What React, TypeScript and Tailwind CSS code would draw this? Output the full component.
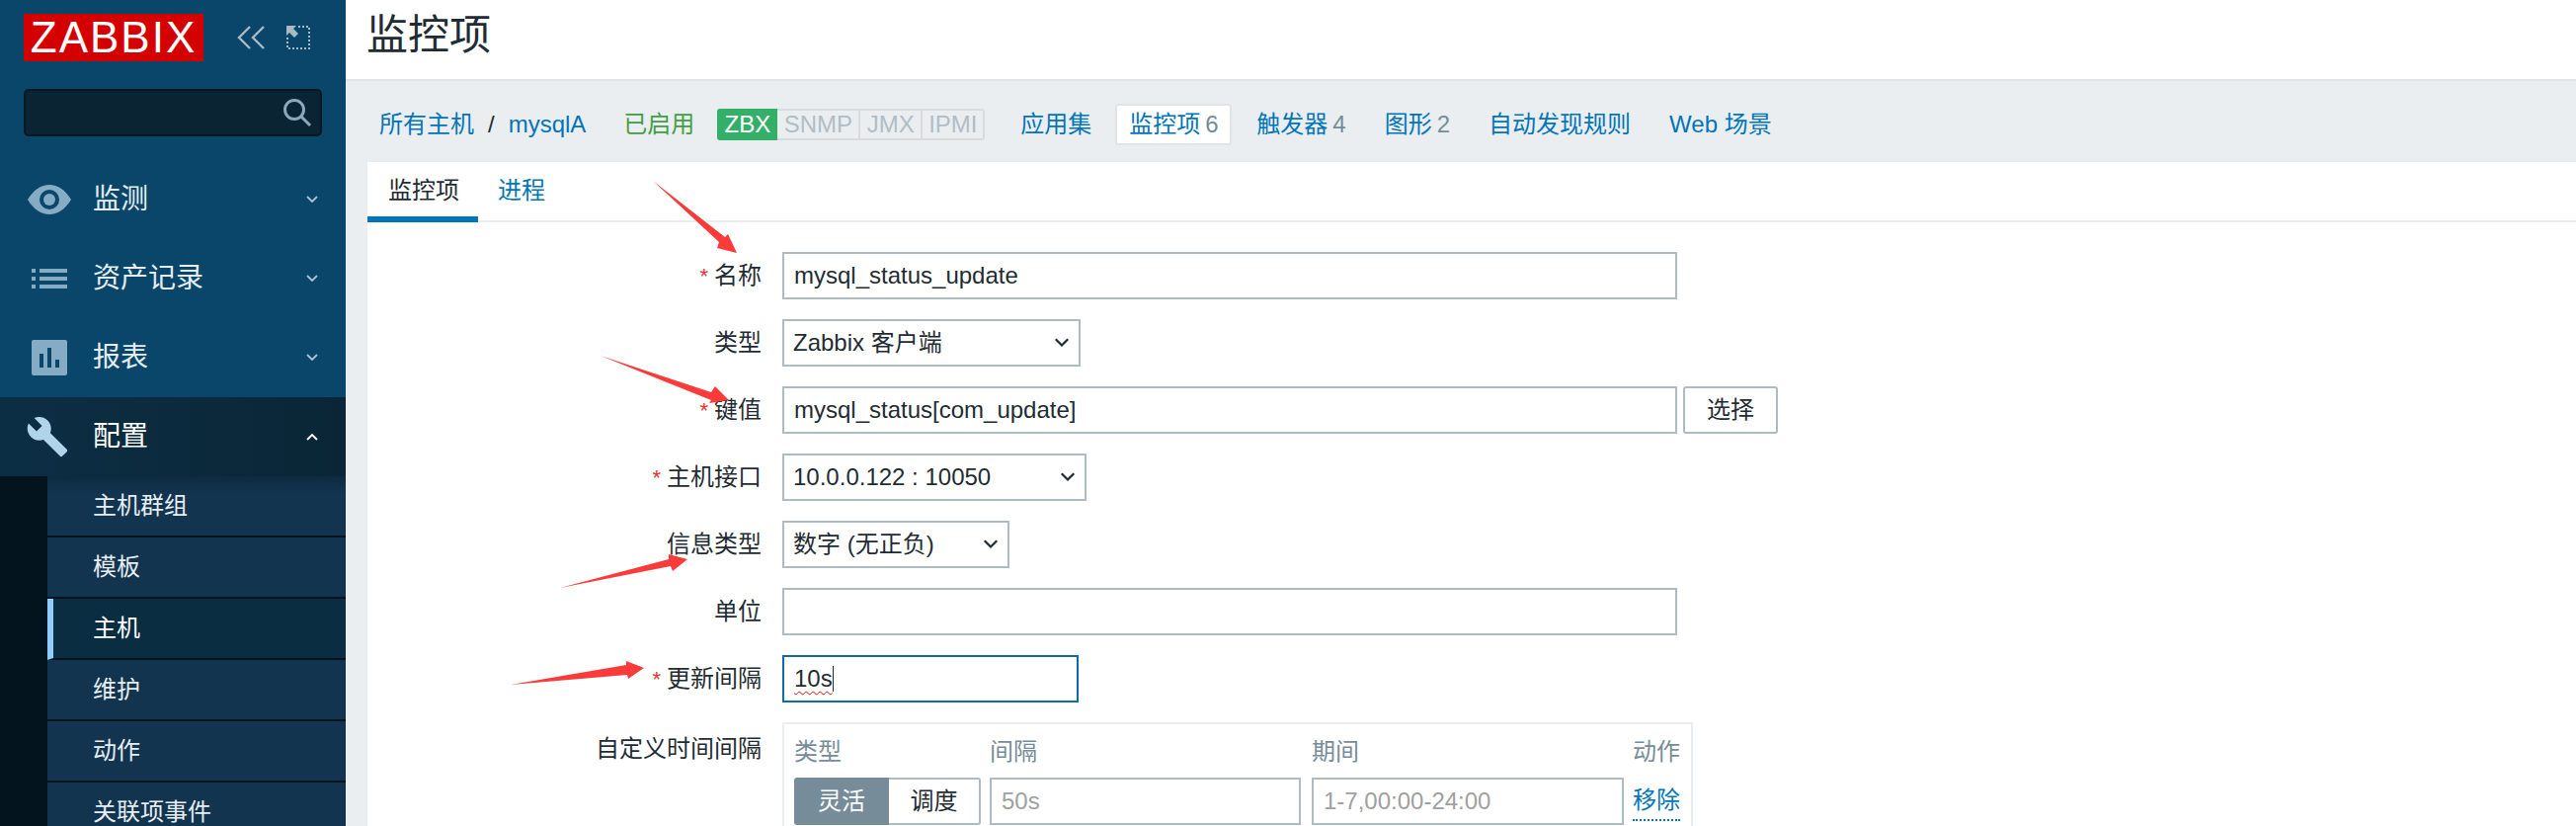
import type { ReactNode } from "react"
import { MdBuild } from "react-icons/md"

const font = { fontFamily: '"Liberation Sans", "Noto Sans CJK SC", sans-serif' }

function Chevron({ up, className }: { up?: boolean; className?: string }) {
  return (
    <svg viewBox="0 0 12 8" className={className} fill="none" stroke="currentColor" strokeWidth="1.8">
      <polyline points={up ? "1,7 6,2 11,7" : "1,1 6,6 11,1"} />
    </svg>
  )
}

function EyeIcon() {
  return (
    <svg viewBox="0 0 44 30" className="w-[44px] h-[30px]">
      <path d="M0 15C6 5 14 0 22 0s16 5 22 15c-6 10-14 15-22 15S6 25 0 15z" fill="#86acc5" />
      <circle cx="22" cy="15" r="10" fill="#0a466a" />
      <circle cx="22" cy="15" r="6" fill="#86acc5" />
    </svg>
  )
}

function ListIcon() {
  return (
    <svg viewBox="0 0 36 20" className="w-[36px] h-[20px]" fill="#86acc5">
      <rect x="0" y="0" width="4" height="4" />
      <rect x="0" y="8" width="4" height="4" />
      <rect x="0" y="16" width="4" height="4" />
      <rect x="8" y="0" width="28" height="4" />
      <rect x="8" y="8" width="28" height="4" />
      <rect x="8" y="16" width="28" height="4" />
    </svg>
  )
}

function ChartIcon() {
  return (
    <svg viewBox="0 0 36 36" className="w-[36px] h-[36px]">
      <rect width="36" height="36" rx="2" fill="#86acc5" />
      <rect x="8" y="14" width="4" height="14" fill="#0a466a" />
      <rect x="16" y="8" width="4" height="20" fill="#0a466a" />
      <rect x="24" y="20" width="4" height="8" fill="#0a466a" />
    </svg>
  )
}

const mainNav = [
  { label: "监测", icon: <EyeIcon /> },
  { label: "资产记录", icon: <ListIcon /> },
  { label: "报表", icon: <ChartIcon /> },
]

const subNav = ["主机群组", "模板", "主机", "维护", "动作", "关联项事件"]

function subNavClass(item: string) {
  const base = "h-[62px] border-b-2 border-[#04141e] flex items-center text-[24px] "
  if (item === "主机") return base + "bg-[#0a2d42] border-l-[6px] border-l-[#8fcdff] pl-[40px] text-white"
  if (item === "主机群组") return base + "bg-gradient-to-b from-[#0c2b40] to-[#12344f] to-30% pl-[46px] text-[#e6eef3]"
  return base + "bg-[#12344f] pl-[46px] text-[#e6eef3]"
}

function Sidebar() {
  return (
    <aside className="w-[350px] shrink-0 bg-[#0a466a] flex flex-col">
      <div className="flex items-start pl-6 pt-[14px] h-[90px] shrink-0">
        <div className="w-[182px] h-[48px] bg-[#d40000] text-white text-[44px] leading-[48px] tracking-[2px] text-center">
          ZABBIX
        </div>
        <svg viewBox="0 0 28 24" className="w-[28px] h-[24px] ml-[34px] mt-[12px] text-[#a8bac6]" fill="none" stroke="currentColor" strokeWidth="2.4">
          <polyline points="13,1 2,12 13,23" />
          <polyline points="27,1 16,12 27,23" />
        </svg>
        <svg viewBox="0 0 24 24" className="w-[24px] h-[24px] ml-[22px] mt-[12px] text-[#a8bac6]" fill="none">
          <path d="M12 1H23V23H1V12" stroke="currentColor" strokeWidth="2" strokeDasharray="2 2" />
          <path d="M0 0H10L7 3L12 8L8 12L3 7L0 10Z" fill="currentColor" />
        </svg>
      </div>
      <div className="mx-6 w-[302px] h-[48px] shrink-0 rounded-[5px] border-2 border-[#041820] bg-[#0a2433] flex items-center justify-end pr-2">
        <svg viewBox="0 0 30 30" className="w-[30px] h-[30px] text-[#8aa9bc]" fill="none" stroke="currentColor" strokeWidth="3">
          <circle cx="12" cy="12" r="9.5" />
          <line x1="19" y1="19" x2="28" y2="28" />
        </svg>
      </div>
      <nav className="mt-6 shrink-0">
        {mainNav.map((item) => (
          <div key={item.label} className="h-[80px] flex items-center text-[28px] text-[#e6eef3]">
            <span className="w-[94px] pl-[26px] flex justify-center pr-[20px]">{item.icon}</span>
            <span>{item.label}</span>
            <Chevron className="w-[12px] h-[8px] ml-auto mr-[28px] text-[#a9c4d3]" />
          </div>
        ))}
        <div className="h-[80px] flex items-center text-[28px] text-white bg-gradient-to-r from-[#0c2e44] to-[#0a2636]">
          <span className="w-[94px] flex pl-[26px]">
            <MdBuild className="w-[44px] h-[44px] text-[#b0d4ea]" />
          </span>
          <span>配置</span>
          <Chevron up className="w-[12px] h-[8px] ml-auto mr-[28px] text-white" />
        </div>
        <div className="bg-[#04141e] pl-12">
          {subNav.map((item) => (
            <div key={item} className={subNavClass(item)}>
              {item}
            </div>
          ))}
        </div>
      </nav>
    </aside>
  )
}

function HostNav() {
  const proto = [
    { t: "SNMP", w: "w-[84px]" },
    { t: "JMX", w: "w-[63px]" },
    { t: "IPMI", w: "w-[63px]" },
  ]
  return (
    <div className="h-[80px] pt-2 bg-[#ebeef0] flex items-center pl-[34px] text-[24px] text-[#0275b8] whitespace-nowrap">
      <span>所有主机</span>
      <span className="mx-[14px] text-[#1f2c33]">/</span>
      <span>mysqlA</span>
      <span className="ml-[38px] text-[#429e47]">已启用</span>
      <div className="ml-[23px] h-[32px] flex text-[#b1bdc6] leading-[28px]">
        <span className="w-[61px] rounded-l-[3px] bg-[#34af67] text-white text-center leading-[32px]">ZBX</span>
        {proto.map((p, i) => (
          <span key={p.t} className={`${p.w} border-y-2 border-r-2 border-[#d5dbdf] text-center ${i === 2 ? "rounded-r-[3px]" : ""}`}>
            {p.t}
          </span>
        ))}
      </div>
      <span className="ml-[36px]">应用集</span>
      <span className="ml-[24px] h-[42px] w-[118px] rounded-[3px] border-2 border-[#dfe4e7] bg-white flex items-center justify-center">
        监控项<span className="ml-[5px] text-[#768d99]">6</span>
      </span>
      <span className="ml-[25px]">触发器<span className="ml-[5px] text-[#768d99]">4</span></span>
      <span className="ml-[39px]">图形<span className="ml-[5px] text-[#768d99]">2</span></span>
      <span className="ml-[39px]">自动发现规则</span>
      <span className="ml-[39px]">Web 场景</span>
    </div>
  )
}

function Row({ label, required, children, top }: { label: string; required?: boolean; children: ReactNode; top?: boolean }) {
  return (
    <div className={`flex ${top ? "items-start" : "items-center"}`}>
      <div className={`w-[399px] shrink-0 text-right text-[#1f2c33] ${top ? "pt-[9px]" : ""}`}>
        {required && <span className="text-[#e33734] mr-[6px] text-[22px]">*</span>}
        {label}
      </div>
      <div className="ml-[21px] flex">{children}</div>
    </div>
  )
}

const box = "h-[48px] border-2 border-[#acbbc4] bg-white px-[10px] flex items-center text-[#1f2c33]"

function Select({ value, width }: { value: string; width: string }) {
  return (
    <div className={`${box} ${width} justify-between !pl-[9px] pr-[8px]`}>
      <span>{value}</span>
      <Chevron className="w-[18px] h-[10px] text-[#1f2c33]" />
    </div>
  )
}

function Field({ value, width }: { value?: string; width: string }) {
  return <div className={`${box} ${width}`}>{value}</div>
}

function Form() {
  return (
    <div className="pt-[30px] flex flex-col gap-[20px]">
      <Row label="名称" required>
        <Field value="mysql_status_update" width="w-[906px]" />
      </Row>
      <Row label="类型">
        <Select value="Zabbix 客户端" width="w-[302px]" />
      </Row>
      <Row label="键值" required>
        <Field value="mysql_status[com_update]" width="w-[906px]" />
        <button className="ml-[6px] w-[96px] h-[48px] rounded-[3px] border-2 border-[#acbbc4] bg-white text-[#1f2c33]">选择</button>
      </Row>
      <Row label="主机接口" required>
        <Select value="10.0.0.122 : 10050" width="w-[308px]" />
      </Row>
      <Row label="信息类型">
        <Select value="数字 (无正负)" width="w-[230px]" />
      </Row>
      <Row label="单位">
        <Field width="w-[906px]" />
      </Row>
      <Row label="更新间隔" required>
        <div className="h-[48px] w-[300px] border-2 border-[#0f6ba3] bg-white px-[10px] flex items-center text-[#1f2c33]">
          <span className="underline decoration-wavy decoration-[#ff0000] decoration-1 underline-offset-4">10s</span>
          <span className="w-[1px] h-[26px] bg-[#1f2c33]" />
        </div>
      </Row>
      <Row label="自定义时间间隔" top>
        <div className="w-[922px] h-[120px] border-2 border-[#ebeef0] px-[10px] pt-[10px]">
          <div className="flex text-[#768d99] h-[44px] items-start">
            <span className="w-[198px]">类型</span>
            <span className="w-[326px]">间隔</span>
            <span className="w-[325px]">期间</span>
            <span>动作</span>
          </div>
          <div className="flex">
            <div className="flex w-[189px] h-[48px]">
              <span className="w-[96px] bg-[#768d99] text-white rounded-l-[3px] flex items-center justify-center">灵活</span>
              <span className="w-[93px] border-2 border-l-0 border-[#acbbc4] rounded-r-[3px] text-[#1f2c33] flex items-center justify-center">调度</span>
            </div>
            <div className={`${box} w-[315px] ml-[9px] !text-[#a0a0a0]`}>50s</div>
            <div className={`${box} w-[316px] ml-[11px] !text-[#a0a0a0]`}>1-7,00:00-24:00</div>
            <span className="ml-[9px] h-[39px] mt-[5px] text-[#0275b8] border-b-2 border-dotted border-[#0275b8] leading-[36px]">移除</span>
          </div>
        </div>
      </Row>
    </div>
  )
}

function Arrows() {
  return (
    <svg viewBox="0 0 2608 836" className="absolute inset-0 w-[2608px] h-[836px] pointer-events-none" fill="#fb3a3a">
      <polygon points="661,183 734,240 737,237 746,256 726,251 728,245" />
      <polygon points="608,360 720,397 724,391 738,405 718,408 720,405" />
      <polygon points="567,595 677,566 677,561 696,566 681,578 679,573" />
      <polygon points="517,693 634,673 634,669 652,676 636,687 635,683" />
    </svg>
  )
}

export default function App() {
  return (
    <div className="relative flex w-[2608px] h-[836px] overflow-hidden bg-white text-[24px]" style={font}>
      <Sidebar />
      <main className="flex-1 min-w-0">
        <header className="h-[82px] border-b-2 border-[#dfe4e7] bg-white pl-[21px] flex items-center text-[42px] leading-none text-[#1f2c33] pb-[8px]">
          监控项
        </header>
        <HostNav />
        <div className="bg-[#ebeef0] pl-[20px] h-[674px]">
          <section className="h-full bg-white border-l-2 border-t-2 border-[#ebeef0]">
            <div className="h-[61px] border-b-2 border-[#ebeef0] flex text-[24px]">
              <span className="w-[112px] h-[61px] border-b-[6px] border-[#0275b8] pl-[21px] pt-[11px] text-[#1f2c33]">监控项</span>
              <span className="ml-[20px] pt-[11px] text-[#0275b8]">进程</span>
            </div>
            <Form />
          </section>
        </div>
      </main>
      <Arrows />
    </div>
  )
}
